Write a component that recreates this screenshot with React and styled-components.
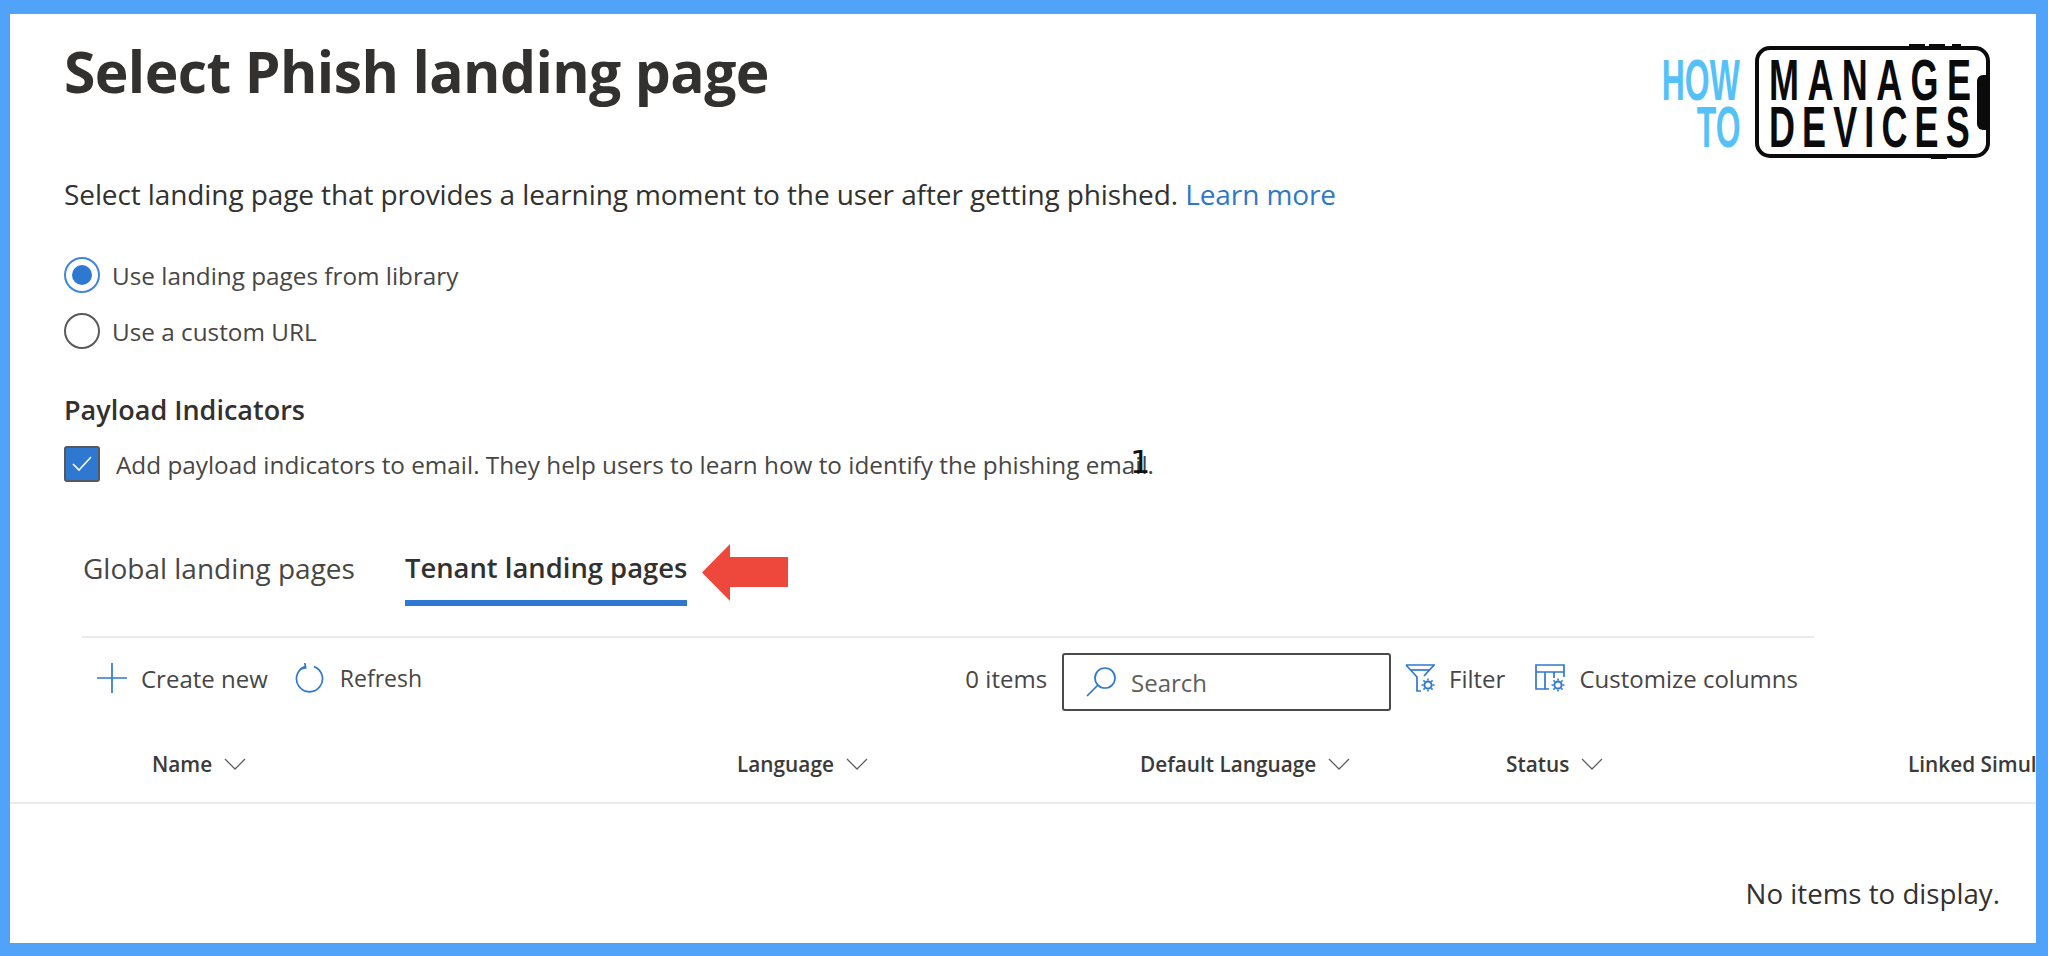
import React from 'react';
import styled, { createGlobalStyle } from 'styled-components';

const GlobalStyle = createGlobalStyle`
    html, body {
        margin: 0;
        padding: 0;
        background: #50a3f8;
    }
    body {
        font-family: "Open Sans", "Noto Sans", sans-serif;
        color: #323130;
    }
`;

const Frame = styled.div`
    position: relative;
    box-sizing: border-box;
    width: 2026px;
    height: 929px;
    margin: 14px 0 0 10px;
    background: #fff;
    overflow: hidden;
`;

const TitleRow = styled.div`
    display: flex;
    justify-content: space-between;
    height: 142px;
    padding: 17px 46px 0 54px;
    box-sizing: border-box;
`;

const Title = styled.h1`
    margin: 0;
    font-size: 57px;
    line-height: 80px;
    font-weight: 700;
    letter-spacing: -0.6px;
    color: #323130;
`;

const Logo = styled.div`
    display: flex;
    gap: 15px;
    margin-top: 15px;
`;

const HowTo = styled.div`
    display: flex;
    flex-direction: column;
    align-items: flex-end;
    gap: 5px;
    padding-top: 13px;
    color: #55c1f9;
`;

const LogoLine = styled.div`
    height: 42px;
    font-family: "Liberation Sans Narrow", "Liberation Sans", sans-serif;
    font-weight: 700;
    font-size: 58px;
    line-height: 42px;
    transform: scaleX(0.55);
    transform-origin: right center;
`;

const Phone = styled.div`
    position: relative;
    box-sizing: border-box;
    width: 235px;
    height: 112px;
    border: 4px solid #0b0b0b;
    border-radius: 15px;
    padding: 9px 0 0 10px;
    display: flex;
    flex-direction: column;
    gap: 5px;
`;

const PhoneRow = styled.div`
    height: 42px;
    white-space: nowrap;
    color: #0b0b0b;
    font-family: "Liberation Sans Narrow", "Liberation Sans", sans-serif;
    font-weight: 700;
    font-size: 58px;
    line-height: 42px;
    letter-spacing: ${(p) => p.$spacing}px;
    transform: scaleX(0.62);
    transform-origin: left center;
`;

const SideButton = styled.div`
    position: absolute;
    right: -2px;
    top: 25px;
    width: 11px;
    height: 55px;
    background: #0b0b0b;
    border-radius: 6px 0 0 6px;
`;

const TopButton = styled.div`
    position: absolute;
    top: ${(p) => (p.$bottom ? '107px' : '-6px')};
    left: ${(p) => p.$left}px;
    width: ${(p) => p.$width}px;
    height: 2px;
    background: #0b0b0b;
`;

const Section = styled.div`
    padding-left: 54px;
`;

const Description = styled.p`
    margin: 18px 0 0;
    font-size: 28px;
    line-height: 40px;
    letter-spacing: -0.1px;
`;

const LearnMore = styled.a`
    color: #2f78c9;
    text-decoration: none;
`;

const OptionRow = styled.div`
    display: flex;
    align-items: center;
    gap: ${(p) => p.$gap || 12}px;
    height: 36px;
    margin-top: ${(p) => p.$top}px;
    font-size: 24.3px;
    color: #484644;
`;

const Radio = styled.span`
    box-sizing: border-box;
    display: flex;
    align-items: center;
    justify-content: center;
    width: 36px;
    height: 36px;
    border-radius: 50%;
    border: 2px solid ${(p) => (p.$checked ? '#3f86dc' : '#5a5a5a')};

    &::after {
        content: '';
        display: ${(p) => (p.$checked ? 'block' : 'none')};
        width: 20px;
        height: 20px;
        border-radius: 50%;
        background: #2f78d2;
    }
`;

const Checkbox = styled.span`
    box-sizing: border-box;
    display: flex;
    align-items: center;
    justify-content: center;
    width: 36px;
    height: 36px;
    border-radius: 3px;
    border: 2px solid #55595f;
    background: #2f78d2;
`;

const SubHeading = styled.h2`
    margin: 43px 0 0;
    font-size: 27px;
    line-height: 36px;
    font-weight: 600;
    color: #323130;
`;

const Note = styled.span`
    position: absolute;
    left: 1120px;
    top: 430px;
    font-family: "DejaVu Sans", sans-serif;
    font-size: 32px;
    line-height: 36px;
    color: #111;
`;

const Tabs = styled.div`
    display: flex;
    margin: 66px 0 0 19px;
`;

const Tab = styled.div`
    box-sizing: border-box;
    height: 58px;
    margin-right: ${(p) => p.$gap || 0}px;
    font-size: ${(p) => (p.$active ? 27.4 : 28)}px;
    line-height: 40px;
    font-weight: ${(p) => (p.$active ? 600 : 400)};
    color: ${(p) => (p.$active ? '#323130' : '#484644')};
    border-bottom: 6px solid ${(p) => (p.$active ? '#2f78d2' : 'transparent')};
`;

const ArrowIcon = styled.svg`
    display: block;
    margin: -4px 0 0 15px;
`;

const CommandBar = styled.div`
    display: flex;
    align-items: center;
    box-sizing: border-box;
    width: 1732px;
    height: 82px;
    margin: 30px 0 0 18px;
    padding: 0 16px 0 15px;
    border-top: 2px solid #edebe9;
`;

const Command = styled.div`
    display: flex;
    align-items: center;
    gap: ${(p) => p.$gap || 14}px;
    margin-left: ${(p) => p.$left || 0}px;
    font-size: ${(p) => p.$size || 24}px;
    color: #484644;
`;

const ItemCount = styled.div`
    margin-left: auto;
    font-size: 24px;
    color: #484644;
`;

const SearchBox = styled.div`
    box-sizing: border-box;
    display: flex;
    align-items: center;
    gap: 15px;
    width: 329px;
    height: 58px;
    margin: 8px 0 0 15px;
    padding-left: 22px;
    border: 2px solid #4a4a4a;
    border-radius: 3px;
    font-size: 24px;
    color: #605e5c;
`;

const HeaderRow = styled.div`
    display: grid;
    grid-template-columns: 585px 403px 366px 402px 1fr;
    box-sizing: border-box;
    height: 88px;
    padding: 25px 0 0 142px;
    margin-top: -2px;
    border-bottom: 2px solid #edebe9;
`;

const HeaderCell = styled.div`
    display: flex;
    align-items: center;
    gap: 12px;
    height: 46px;
    white-space: nowrap;
    font-size: 20.8px;
    font-weight: 600;
    color: #3b3a39;
`;

const EmptyText = styled.div`
    margin-top: 69px;
    padding-right: 36px;
    text-align: right;
    font-size: 27.7px;
    line-height: 40px;
    color: #323130;
`;

const Chevron = () => (
    <svg width="22" height="12" viewBox="0 0 22 12" fill="none" stroke="#605e5c" strokeWidth="1.3">
        <path d="M1 1l10 10L21 1" />
    </svg>
);

const Gear = ({ x, y }) => (
    <g transform={`translate(${x} ${y})`} stroke="#2f78d2" fill="none">
        <circle r="3.6" strokeWidth="2" />
        <path d="M0-6.5v2M0 4.5v2M-6.5 0h2M4.5 0h2M-4.6-4.6l1.4 1.4M3.2 3.2l1.4 1.4M-4.6 4.6l1.4-1.4M3.2-3.2l1.4-1.4" strokeWidth="1.6" />
    </g>
);

function App() {
    return (
        <Frame>
            <GlobalStyle />
            <TitleRow>
                <Title>Select Phish landing page</Title>
                <Logo>
                    <HowTo>
                        <LogoLine>HOW</LogoLine>
                        <LogoLine>TO</LogoLine>
                    </HowTo>
                    <Phone>
                        <PhoneRow $spacing={13.6}>MANAGE</PhoneRow>
                        <PhoneRow $spacing={11.5}>DEVICES</PhoneRow>
                        <SideButton />
                        <TopButton $left={150} $width={16} />
                        <TopButton $left={170} $width={16} />
                        <TopButton $left={193} $width={9} />
                        <TopButton $left={172} $width={16} $bottom />
                    </Phone>
                </Logo>
            </TitleRow>

            <Section>
                <Description>
                    Select landing page that provides a learning moment to the user after getting phished.{' '}
                    <LearnMore>Learn more</LearnMore>
                </Description>
                <OptionRow $top={43}>
                    <Radio $checked />
                    Use landing pages from library
                </OptionRow>
                <OptionRow $top={20}>
                    <Radio />
                    Use a custom URL
                </OptionRow>
                <SubHeading>Payload Indicators</SubHeading>
                <OptionRow $top={18} $gap={16}>
                    <Checkbox>
                        <svg width="20" height="16" viewBox="0 0 20 16" fill="none" stroke="#fff" strokeWidth="1.6">
                            <path d="M1 8l6 6L19 1" />
                        </svg>
                    </Checkbox>
                    Add payload indicators to email. They help users to learn how to identify the phishing email.
                </OptionRow>
                <Tabs>
                    <Tab $gap={50}>Global landing pages</Tab>
                    <Tab $active>Tenant landing pages</Tab>
                    <ArrowIcon width="86" height="57" viewBox="0 0 86 57">
                        <path d="M0 28.5L28 0v13h58v30H28v14z" fill="#ee473c" />
                    </ArrowIcon>
                </Tabs>
            </Section>

            <Note>1</Note>

            <Section>
                <CommandBar>
                    <Command>
                        <svg width="30" height="30" viewBox="0 0 30 30" fill="none" stroke="#2f78d2" strokeWidth="1.7">
                            <path d="M15 0v30M0 15h30" />
                        </svg>
                        Create new
                    </Command>
                    <Command $left={27} $gap={15} $size={23}>
                        <svg width="30" height="30" viewBox="0 0 30 30" fill="none" stroke="#2f78d2" strokeWidth="1.7">
                            <path d="M10 3.6a13 13 0 1 0 9 0" />
                            <path d="M10.5 0v5H5" transform="rotate(-10 10 4)" />
                        </svg>
                        Refresh
                    </Command>
                    <ItemCount>0 items</ItemCount>
                    <SearchBox>
                        <svg width="30" height="30" viewBox="0 0 30 30" fill="none" stroke="#2f78d2" strokeWidth="1.7">
                            <circle cx="19" cy="11" r="10" />
                            <path d="M12 18L1 29" />
                        </svg>
                        Search
                    </SearchBox>
                    <Command $left={14} $gap={14}>
                        <svg width="30" height="28" viewBox="0 0 30 28" fill="none" stroke="#2f78d2" strokeWidth="1.7">
                            <path d="M1 1h28L19 12M1 1l11 12v14h4" />
                            <path d="M6 6h19" />
                            <Gear x={23} y={21} />
                        </svg>
                        Filter
                    </Command>
                    <Command $left={30} $gap={14}>
                        <svg width="30" height="28" viewBox="0 0 30 28" fill="none" stroke="#2f78d2" strokeWidth="1.7">
                            <path d="M14 25H1V1h28v12M1 8h28M10 8v17M19 8v6" />
                            <Gear x={23} y={21} />
                        </svg>
                        Customize columns
                    </Command>
                </CommandBar>
            </Section>

            <HeaderRow>
                <HeaderCell>Name <Chevron /></HeaderCell>
                <HeaderCell>Language <Chevron /></HeaderCell>
                <HeaderCell>Default Language <Chevron /></HeaderCell>
                <HeaderCell>Status <Chevron /></HeaderCell>
                <HeaderCell>Linked Simulations</HeaderCell>
            </HeaderRow>

            <EmptyText>No items to display.</EmptyText>
        </Frame>
    );
}

export default App;
